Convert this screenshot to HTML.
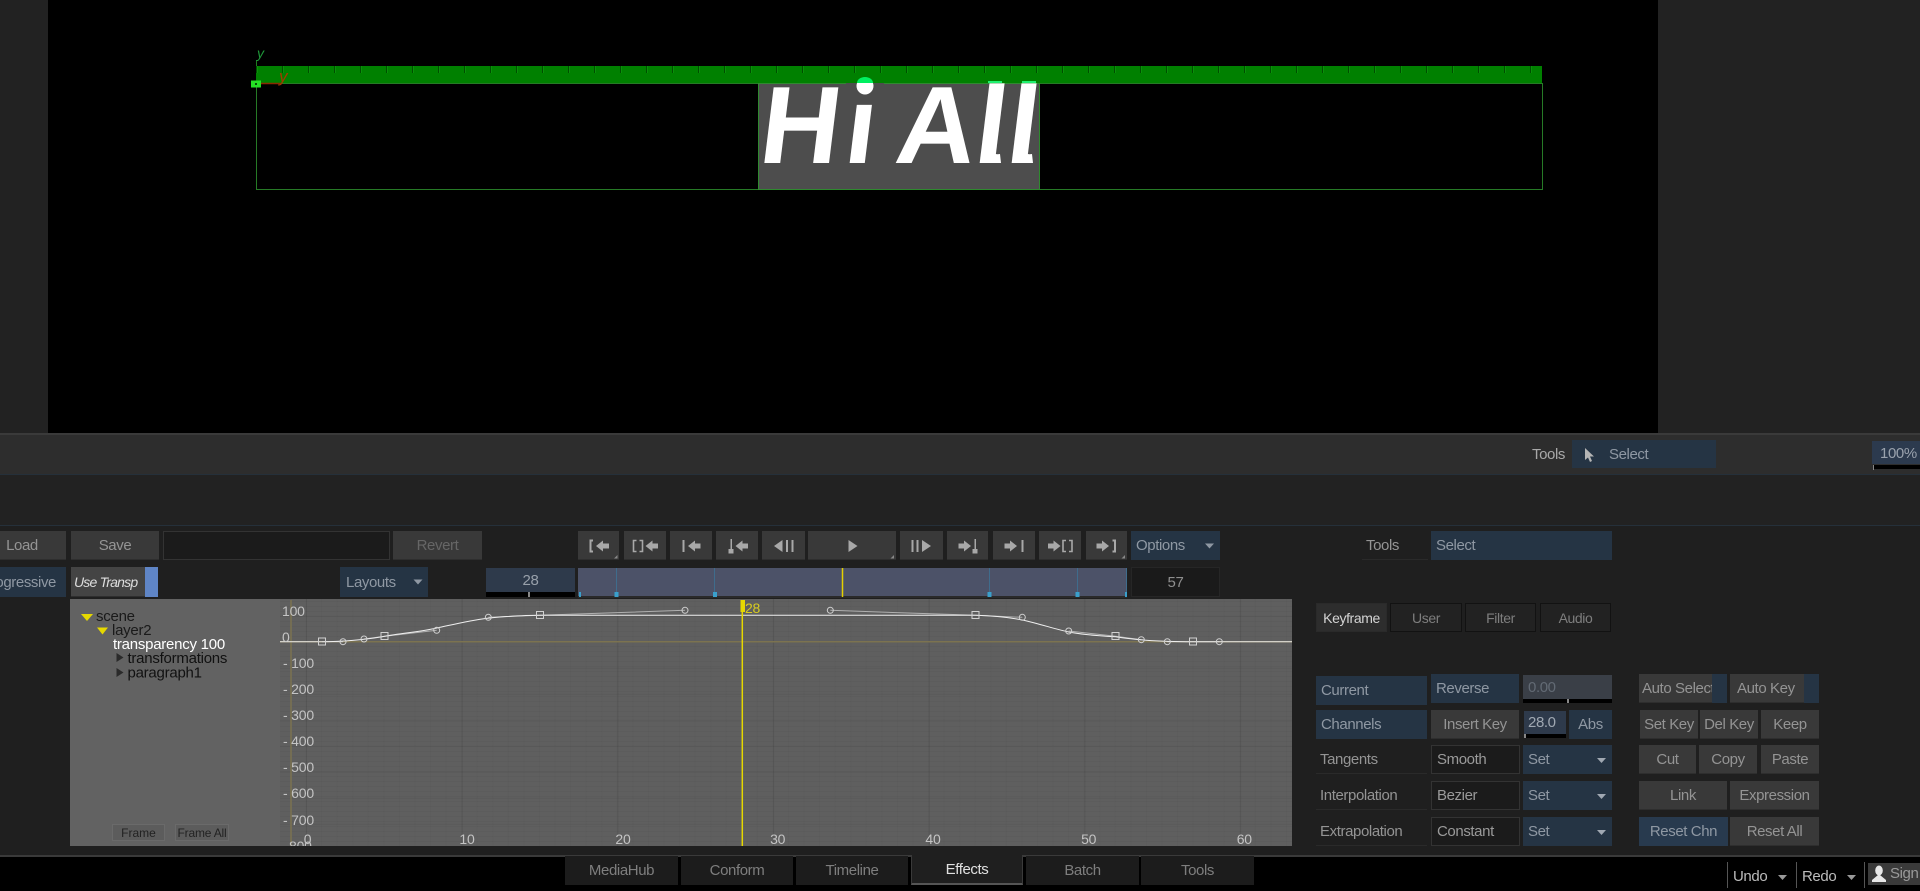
<!DOCTYPE html>
<html>
<head>
<meta charset="utf-8">
<title>Effects</title>
<style>
html,body{margin:0;padding:0;background:#000;}
body{position:relative;width:1920px;height:891px;overflow:hidden;font-family:"Liberation Sans",sans-serif;font-size:15px;letter-spacing:-.4px;color:#949494;}
div{box-sizing:border-box;}
.a{position:absolute;}
.b{position:absolute;display:flex;align-items:center;justify-content:center;background:#393939;color:#949494;white-space:nowrap;overflow:hidden;box-shadow:inset 0 -1px 0 #2e2e2e;}
.u{background:#253444;color:#8f98a3;box-shadow:none;}
.l{justify-content:flex-start;padding-left:5px;}
.f{background:#1b1b1b;border:1px solid #333;box-shadow:none;color:#9a9a9a;}
.t{position:absolute;white-space:nowrap;line-height:16px;}
.tab{position:absolute;top:856px;height:29px;display:flex;align-items:center;justify-content:center;background:#1c1c1c;color:#7e7e7e;}
.rt{position:absolute;top:603px;height:29px;display:flex;align-items:center;justify-content:center;background:#222;border:1px solid #121212;color:#7e7e7e;font-size:14px;}
.ul{position:absolute;height:29px;display:flex;align-items:center;padding-left:4px;color:#949494;border-bottom:1px solid #2a2a2a;white-space:nowrap;}
</style>
</head>
<body>

<!-- viewer -->
<div class="a" style="left:0;top:0;width:48px;height:434px;background:#222"></div>
<div class="a" style="left:1658px;top:0;width:262px;height:434px;background:#222"></div>

<div class="a" style="left:256px;top:83px;width:1287px;height:107px;border:1px solid #267a26"></div>
<div class="a" style="left:256px;top:66px;width:1286px;height:17px;background:#008000 linear-gradient(90deg,#004f00 1px,#0a900a 1px,#0a900a 2px,transparent 2px) 0 0/26px 7px repeat-x"></div>
<div class="a" style="left:758px;top:83px;width:282px;height:107px;background:#4d4d4d;border:1px solid #2f8a2f;overflow:hidden"></div>

<svg class="a" style="left:0;top:0" width="1920" height="440" viewBox="0 0 1920 440">
  <defs><clipPath id="c"><rect x="759" y="83" width="280" height="105"/></clipPath></defs>
  <g clip-path="url(#c)">
    <g transform="translate(0 163) skewX(-7)">
      <text x="757 842 0 893 972 1004" y="0" letter-spacing="0" font-family="Liberation Sans" font-weight="700" font-size="110" fill="#fff">Hi All</text>
    </g>
    <path d="M846 83H884V98H846Z" fill="#4d4d4d"/>
    <circle cx="865" cy="86" r="8.500" fill="#fff"/>
    <path d="M993 147C992 153 995 155 1000 154L1001 163H988L983 158L985 147Z" fill="#fff"/>
    <path d="M1025 147C1024 153 1027 155 1032 154L1033 163H1020L1015 158L1017 147Z" fill="#fff"/>
  </g>
  <path d="M857 83A8 6 0 0 1 873 83Z" fill="#00f060"/>
  <rect x="988" y="81" width="14" height="2" fill="#20f070"/>
  <rect x="1022" y="81" width="14" height="2" fill="#20f070"/>
  <path d="M256.500 60V66" stroke="#1f7a1f"/>
  <text x="257" y="58" letter-spacing="0" font-family="Liberation Sans" font-style="italic" font-size="14" fill="#1f9a3a">y</text>
  <path d="M258 83.500H281" stroke="#8a2a00" stroke-width="1.500"/>
  <text x="279" y="82" letter-spacing="0" font-family="Liberation Sans" font-style="italic" font-size="17" fill="#a03a00">y</text>
  <rect x="251" y="80.500" width="10" height="7" fill="#25e025"/>
  <rect x="255" y="83" width="2" height="2" fill="#045004"/>
</svg>

<!-- tools bar -->
<div class="a" style="left:0;top:433px;width:1920px;height:42px;background:#2d2d2d;border-top:2px solid #3a3a3a;border-bottom:1px solid #25303a"></div>
<div class="a" style="left:0;top:475px;width:1920px;height:50px;background:#222"></div>
<div class="a" style="left:0;top:525px;width:1920px;height:1px;background:#25303a"></div>
<div class="a" style="left:0;top:526px;width:1920px;height:329px;background:#1f1f1f"></div>
<div class="a" style="left:0;top:855px;width:1920px;height:2px;background:#3a3a3a"></div>
<div class="a" style="left:0;top:857px;width:1920px;height:34px;background:#000"></div>

<div class="t" style="left:1532px;top:447px;color:#a8a8a8">Tools</div>
<div class="b u l" style="left:1572px;top:440px;width:144px;height:28px;padding-left:37px">Select</div>
<svg class="a" style="left:1580px;top:446px" width="16" height="18" viewBox="0 0 16 18"><path d="M5 2V14L8 11.500L10 16L12 15L10 10.500H14Z" fill="#b5b5b5"/></svg>
<div class="b" style="left:1872px;top:441px;width:48px;height:24px;background:#2c3a4e;color:#9aa2ad;justify-content:flex-start;padding-left:8px">100%</div>
<div class="a" style="left:1874px;top:465px;width:46px;height:4px;background:#000"></div>
<div class="a" style="left:1873px;top:465px;width:1px;height:5px;background:#888"></div>

<!-- row 1 -->
<div class="b" style="left:0;top:531px;width:66px;height:29px;padding-right:22px">Load</div>
<div class="b" style="left:71px;top:531px;width:88px;height:29px">Save</div>
<div class="b f" style="left:163px;top:531px;width:227px;height:29px"></div>
<div class="b" style="left:393px;top:531px;width:89px;height:29px;color:#666">Revert</div>

<div class="b" style="left:578px;top:531px;width:41px;height:29px"></div>
<div class="b" style="left:624px;top:531px;width:42px;height:29px"></div>
<div class="b" style="left:670px;top:531px;width:42px;height:29px"></div>
<div class="b" style="left:716px;top:531px;width:42px;height:29px"></div>
<div class="b" style="left:762px;top:531px;width:43px;height:29px"></div>
<div class="b" style="left:808px;top:531px;width:88px;height:29px"></div>
<div class="b" style="left:900px;top:531px;width:43px;height:29px"></div>
<div class="b" style="left:947px;top:531px;width:41px;height:29px"></div>
<div class="b" style="left:993px;top:531px;width:42px;height:29px"></div>
<div class="b" style="left:1039px;top:531px;width:42px;height:29px"></div>
<div class="b" style="left:1086px;top:531px;width:41px;height:29px"></div>
<div class="b u l" style="left:1131px;top:531px;width:89px;height:29px">Options</div>

<svg class="a" style="left:570px;top:531px" width="660" height="30" viewBox="570 531 660 30" fill="#a8a8a8">
  <!-- 1 -->
  <path d="M593 540.500H590.500V551.500H593" fill="none" stroke="#a8a8a8" stroke-width="2"/>
  <path d="M596 546L603 540.500V543.500H609V548.500H603V551.500Z"/>
  <path d="M617.500 555V558.500H614Z" fill="#888"/>
  <!-- 2 -->
  <path d="M636.500 540.500H633.500V551.500H636.500M639.500 540.500H642.500V551.500H639.500" fill="none" stroke="#a8a8a8" stroke-width="1.600"/>
  <path d="M645.500 546L652.500 540.500V543.500H658V548.500H652.500V551.500Z"/>
  <!-- 3 -->
  <rect x="682.500" y="540" width="2" height="12"/>
  <path d="M688 546L695 540.500V543.500H700.500V548.500H695V551.500Z"/>
  <!-- 4 -->
  <rect x="730.500" y="539" width="1.500" height="10"/>
  <rect x="728.500" y="549" width="5" height="4.500"/>
  <path d="M735.500 546L742.500 540.500V543.500H748V548.500H742.500V551.500Z"/>
  <!-- 5 -->
  <path d="M774 546L782.500 540V552Z"/>
  <rect x="786" y="540" width="2" height="12"/>
  <rect x="791.500" y="540" width="2" height="12"/>
  <!-- play -->
  <path d="M848.500 540L857.500 546L848.500 552Z"/>
  <path d="M894 555V558.500H890.500Z" fill="#888"/>
  <!-- 7 -->
  <rect x="911.500" y="540" width="2" height="12"/>
  <rect x="916.500" y="540" width="2" height="12"/>
  <path d="M922 540L931 546L922 552Z"/>
  <!-- 8 -->
  <path d="M971 546L964 540.500V543.500H958.500V548.500H964V551.500Z"/>
  <rect x="974.500" y="539" width="1.500" height="10"/>
  <rect x="972.500" y="549" width="5" height="4.500"/>
  <!-- 9 -->
  <path d="M1017 546L1010 540.500V543.500H1004.500V548.500H1010V551.500Z"/>
  <rect x="1021.500" y="540" width="2" height="12"/>
  <!-- 10 -->
  <path d="M1060.500 546L1053.500 540.500V543.500H1048V548.500H1053.500V551.500Z"/>
  <path d="M1066 540.500H1063V551.500H1066M1069 540.500H1072V551.500H1069" fill="none" stroke="#a8a8a8" stroke-width="1.600"/>
  <!-- 11 -->
  <path d="M1109 546L1102 540.500V543.500H1096.500V548.500H1102V551.500Z"/>
  <path d="M1112.500 540.500H1115V551.500H1112.500" fill="none" stroke="#a8a8a8" stroke-width="2"/>
  <path d="M1125 555V558.500H1121.500Z" fill="#888"/>
  <!-- options arrow -->
  <path d="M1205 543.500H1214L1209.500 548.500Z" fill="#8f98a3"/>
</svg>

<!-- row 2 -->
<div class="b u" style="left:0;top:567px;width:66px;height:30px;justify-content:flex-end;padding-right:10px">Progressive</div>
<div class="b" style="left:71px;top:567px;width:74px;height:30px;background:#444;color:#dedede;font-style:italic;font-size:14px;letter-spacing:-.8px;justify-content:flex-start;padding-left:3px">Use Transp</div>
<div class="a" style="left:145px;top:567px;width:13px;height:30px;background:#5f85c6"></div>
<div class="b u l" style="left:340px;top:567px;width:88px;height:30px;padding-left:6px">Layouts</div>
<svg class="a" style="left:412px;top:578px" width="12" height="8" viewBox="0 0 12 8"><path d="M1.500 1.500H10.500L6 6.500Z" fill="#8f98a3"/></svg>
<div class="b" style="left:486px;top:568px;width:89px;height:24px;background:#2e3a4b;color:#98a0aa;box-shadow:none">28</div>
<div class="a" style="left:486px;top:592px;width:89px;height:5px;background:#000"></div>
<div class="a" style="left:528px;top:592px;width:2px;height:5px;background:#888"></div>

<div class="a" style="left:578px;top:568px;width:549px;height:29px;background:#4c5268"></div>
<div class="a" style="left:578px;top:596px;width:549px;height:2px;background:#2a2a2a"></div>
<svg class="a" style="left:578px;top:568px" width="552" height="29" viewBox="578 568 552 29">
  <g stroke="#3f6c8c" stroke-width="1">
    <path d="M616.500 568V597M714.500 568V597M989.500 568V597M1077.500 568V597M1126.500 568V597"/>
  </g>
  <g fill="#3aa0cc">
    <rect x="579" y="592" width="2" height="5"/>
    <rect x="614.500" y="592" width="4" height="5"/>
    <rect x="713" y="592" width="4" height="5"/>
    <rect x="987.500" y="592" width="4" height="5"/>
    <rect x="1075.500" y="592" width="4" height="5"/>
    <rect x="1125" y="592" width="2" height="5"/>
  </g>
  <path d="M842.500 568V597" stroke="#e6d000" stroke-width="1.500"/>
</svg>
<div class="b f" style="left:1131px;top:567px;width:89px;height:30px;background:#1a1a1a;border-color:#262626;color:#8e8e8e">57</div>

<!-- graph -->
<div class="a" style="left:70px;top:599px;width:1222px;height:247px;background:#626262"></div>
<div class="a" style="left:280px;top:599px;width:1012px;height:247px;background-color:#5f5f5f;background-image:linear-gradient(90deg,rgba(0,0,0,.09) 1px,transparent 1px),linear-gradient(rgba(0,0,0,.06) 1px,transparent 1px),linear-gradient(90deg,rgba(0,0,0,.025) 1px,transparent 1px),linear-gradient(rgba(0,0,0,.035) 1px,transparent 1px);background-size:155.700px 100%,100% 26px,15.570px 100%,100% 5px;background-position:26px 0,0 16.700px,10px 0,0 2px"></div>

<svg class="a" style="left:70px;top:599px" width="1222" height="247" viewBox="70 599 1222 247">
  <!-- tree -->
  <path d="M81 614H93L87 621Z" fill="#e6d800"/>
  <path d="M97 627.500H108L102.500 634.500Z" fill="#e6d800"/>
  <path d="M116.500 653V662L123.500 657.500Z" fill="#2a2a2a"/>
  <path d="M116.500 668V677L123.500 672.500Z" fill="#2a2a2a"/>
  <g font-family="Liberation Sans" font-size="15" letter-spacing="-.25">
    <text x="96" y="621" fill="#1a1a1a">scene</text>
    <text x="112" y="635" fill="#1a1a1a">layer2</text>
    <text x="113" y="649" fill="#fff">transparency 100</text>
    <text x="127.500" y="663" fill="#111">transformations</text>
    <text x="127.500" y="677.500" fill="#111">paragraph1</text>
  </g>
  <!-- axes -->
  <path d="M291 600V846" stroke="#7c7350" stroke-width="1.500"/>
  <path d="M280 641.700H1292" stroke="#7c7350" stroke-width="1.500"/>
  <!-- handle lines -->
  <g fill="none" stroke="#b0b0b0" stroke-width="1">
    <path d="M322 641.700H343M364 639L384.700 636.300L436.700 630.300M488.300 617.300L540 615.300L685 610.300M830.300 610.300L975.700 615.300L1022.300 617.300M1068.700 631L1115.700 636.300L1141.300 639.700M1167.300 641.700H1219.300"/>
  </g>
  <!-- curve -->
  <path d="M280 641.700H322C340 641.700 365 640 384.700 636.300C402 633 420 632 436.700 628C456 624 475 619 500 617C515 616 528 615.300 540 615.300H975.700C995 615.800 1012 618 1022.300 620C1040 624 1055 629 1068.700 632C1085 635 1100 636 1115.700 636.800C1132 639 1150 641.700 1193.300 641.700H1292" fill="none" stroke="#efefef" stroke-width="1"/>
  <!-- key squares -->
  <g fill="none" stroke="#d0d0d0" stroke-width="1">
    <rect x="318.500" y="638" width="7" height="7"/>
    <rect x="381" y="632.500" width="7" height="7"/>
    <rect x="536.500" y="611.500" width="7" height="7"/>
    <rect x="972" y="611.500" width="7" height="7"/>
    <rect x="1112" y="632.500" width="7" height="7"/>
    <rect x="1189.500" y="638" width="7" height="7"/>
    <circle cx="343" cy="641.700" r="3"/>
    <circle cx="364" cy="639" r="3"/>
    <circle cx="436.700" cy="630.300" r="3"/>
    <circle cx="488.300" cy="617.300" r="3"/>
    <circle cx="685" cy="610.300" r="3"/>
    <circle cx="830.300" cy="610.300" r="3"/>
    <circle cx="1022.300" cy="617.300" r="3"/>
    <circle cx="1068.700" cy="631" r="3"/>
    <circle cx="1141.300" cy="639.700" r="3"/>
    <circle cx="1167.300" cy="641.700" r="3"/>
    <circle cx="1219.300" cy="641.700" r="3"/>
  </g>
  <!-- playhead -->
  <path d="M742.300 600V846" stroke="#e6d800" stroke-width="1.500"/>
  <rect x="740.500" y="600" width="4.500" height="12" fill="#e6d800"/>
  <text x="745" y="613" letter-spacing="-.3" font-family="Liberation Sans" font-size="14" fill="#d8cc20">28</text>
  <!-- labels -->
  <g font-family="Liberation Sans" font-size="14" letter-spacing="-.2" fill="#c4c4c4">
    <text x="282" y="616">100</text>
    <text x="282" y="642">0</text>
    <text x="283" y="668">- 100</text>
    <text x="283" y="694">- 200</text>
    <text x="283" y="720">- 300</text>
    <text x="283" y="746">- 400</text>
    <text x="283" y="772">- 500</text>
    <text x="283" y="798">- 600</text>
    <text x="283" y="825">- 700</text>
    <text x="289" y="851">800</text>
    <g text-anchor="middle">
      <text x="307.500" y="844">0</text>
      <text x="467" y="844">10</text>
      <text x="623" y="844">20</text>
      <text x="777.700" y="844">30</text>
      <text x="933" y="844">40</text>
      <text x="1088.700" y="844">50</text>
      <text x="1244.300" y="844">60</text>
    </g>
  </g>
</svg>
<div class="b" style="left:112px;top:824px;width:53px;height:17px;background:#5c5c5c;border:1px solid #6a6a6a;color:#222;font-size:12px;letter-spacing:0;box-shadow:none">Frame</div>
<div class="b" style="left:175px;top:824px;width:54px;height:17px;background:#5c5c5c;border:1px solid #6a6a6a;color:#222;font-size:12px;letter-spacing:-.2px;box-shadow:none">Frame All</div>

<!-- right panel -->
<div class="ul" style="left:1362px;top:531px;width:66px;justify-content:flex-start">Tools</div>
<div class="b u l" style="left:1431px;top:531px;width:181px;height:29px">Select</div>

<div class="rt" style="left:1316px;width:71px;background:#2d2d2d;color:#d4d4d4;border-color:#2a2a2a">Keyframe</div>
<div class="rt" style="left:1390px;width:72px">User</div>
<div class="rt" style="left:1465px;width:71px">Filter</div>
<div class="rt" style="left:1540px;width:71px">Audio</div>

<div class="b u l" style="left:1316px;top:676px;width:111px;height:29px">Current</div>
<div class="b u l" style="left:1431px;top:674px;width:88px;height:29px">Reverse</div>
<div class="b l" style="left:1523px;top:675px;width:89px;height:24px;background:#3a3f47;color:#626a74;box-shadow:none">0.00</div>
<div class="a" style="left:1523px;top:699px;width:89px;height:4px;background:#000"></div>
<div class="a" style="left:1567px;top:699px;width:2px;height:4px;background:#888"></div>

<div class="b u l" style="left:1316px;top:710px;width:111px;height:29px">Channels</div>
<div class="b" style="left:1431px;top:710px;width:88px;height:29px">Insert Key</div>
<div class="b l" style="left:1524px;top:711px;width:42px;height:23px;background:#2e3a4b;color:#a0a8b2;padding-left:4px;box-shadow:none">28.0</div>
<div class="a" style="left:1524px;top:734px;width:42px;height:4px;background:#000"></div>
<div class="a" style="left:1524px;top:734px;width:2px;height:4px;background:#888"></div>
<div class="b u" style="left:1569px;top:710px;width:43px;height:29px">Abs</div>

<div class="ul" style="left:1316px;top:745px;width:111px">Tangents</div>
<div class="b f l" style="left:1431px;top:745px;width:89px;height:29px">Smooth</div>
<div class="b u l" style="left:1523px;top:745px;width:89px;height:29px">Set</div>

<div class="ul" style="left:1316px;top:781px;width:111px">Interpolation</div>
<div class="b f l" style="left:1431px;top:781px;width:89px;height:29px">Bezier</div>
<div class="b u l" style="left:1523px;top:781px;width:89px;height:29px">Set</div>

<div class="ul" style="left:1316px;top:817px;width:111px">Extrapolation</div>
<div class="b f l" style="left:1431px;top:817px;width:89px;height:29px">Constant</div>
<div class="b u l" style="left:1523px;top:817px;width:89px;height:29px">Set</div>

<svg class="a" style="left:1595px;top:745px" width="14" height="100" viewBox="1595 745 14 100" fill="#a0a8b2">
  <path d="M1597 758H1606L1601.500 763Z"/>
  <path d="M1597 794H1606L1601.500 799Z"/>
  <path d="M1597 830H1606L1601.500 835Z"/>
</svg>

<div class="a" style="left:1639px;top:674px;width:88px;height:29px;background:#253444"></div>
<div class="b" style="left:1639px;top:674px;width:73px;height:29px;justify-content:flex-start;padding-left:3px">Auto Select</div>
<div class="a" style="left:1730px;top:674px;width:89px;height:29px;background:#253444"></div>
<div class="b" style="left:1730px;top:674px;width:74px;height:29px;justify-content:flex-start;padding-left:7px">Auto Key</div>

<div class="b" style="left:1640px;top:710px;width:58px;height:29px">Set Key</div>
<div class="b" style="left:1700px;top:710px;width:58px;height:29px">Del Key</div>
<div class="b" style="left:1761px;top:710px;width:58px;height:29px">Keep</div>

<div class="b" style="left:1639px;top:745px;width:57px;height:29px">Cut</div>
<div class="b" style="left:1699px;top:745px;width:58px;height:29px">Copy</div>
<div class="b" style="left:1761px;top:745px;width:58px;height:29px">Paste</div>

<div class="b" style="left:1639px;top:781px;width:88px;height:29px">Link</div>
<div class="b" style="left:1730px;top:781px;width:89px;height:29px">Expression</div>

<div class="b u" style="left:1639px;top:817px;width:89px;height:29px;background:#283a4e">Reset Chn</div>
<div class="b" style="left:1730px;top:817px;width:89px;height:29px">Reset All</div>

<!-- bottom tabs -->
<div class="tab" style="left:565px;width:113px">MediaHub</div>
<div class="tab" style="left:681px;width:112px">Conform</div>
<div class="tab" style="left:796px;width:112px">Timeline</div>
<div class="tab" style="left:911px;top:855px;height:30px;width:112px;background:#1f1f1f;color:#e0e0e0;border:1px solid #3a3a3a;border-top:none;border-bottom:2px solid #555">Effects</div>
<div class="tab" style="left:1026px;width:113px">Batch</div>
<div class="tab" style="left:1141px;width:113px">Tools</div>

<!-- bottom right -->
<div class="a" style="left:1727px;top:862px;width:1px;height:26px;background:#555"></div>
<div class="t" style="left:1733px;top:869px;color:#bcbcbc">Undo</div>
<svg class="a" style="left:1777px;top:874px" width="11" height="7" viewBox="0 0 11 7"><path d="M1 1H10L5.500 6Z" fill="#999"/></svg>
<div class="a" style="left:1796px;top:862px;width:1px;height:26px;background:#555"></div>
<div class="t" style="left:1802px;top:869px;color:#bcbcbc">Redo</div>
<svg class="a" style="left:1846px;top:874px" width="11" height="7" viewBox="0 0 11 7"><path d="M1 1H10L5.500 6Z" fill="#999"/></svg>
<div class="a" style="left:1864px;top:862px;width:1px;height:26px;background:#555"></div>
<div class="a" style="left:1868px;top:863px;width:52px;height:22px;background:#3a3a3a"></div>
<svg class="a" style="left:1870px;top:864px" width="18" height="20" viewBox="0 0 18 20"><ellipse cx="9" cy="6.500" rx="3.800" ry="5" fill="#e8e8e8"/><path d="M8 11H10L16 16V18H2V16Z" fill="#e8e8e8"/></svg>
<div class="t" style="left:1890px;top:866px;color:#9a9a9a;font-size:15px">Sign</div>

</body>
</html>
